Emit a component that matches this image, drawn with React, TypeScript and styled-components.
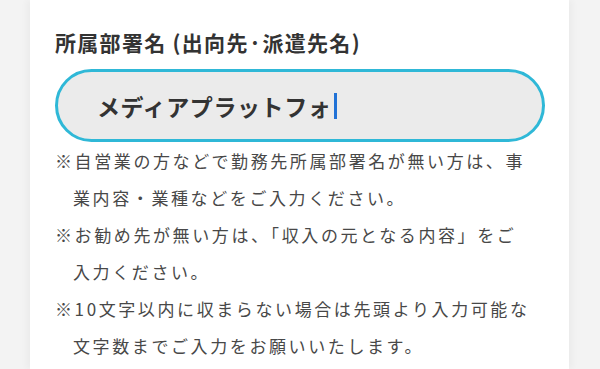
import React from 'react';
import styled, { createGlobalStyle } from 'styled-components';

const GlobalStyle = createGlobalStyle`
  html, body {
    margin: 0;
    padding: 0;
    background: #f3f3f3;
  }
  body {
    font-family: "Noto Sans CJK JP", "Noto Sans", sans-serif;
    color: #333333;
  }
`;

const notes = [
  ['※自営業の方などで勤務先所属部署名が無い方は、事', '業内容・業種などをご入力ください。'],
  ['※お勧め先が無い方は、「収入の元となる内容」をご', '入力ください。'],
  ['※10文字以内に収まらない場合は先頭より入力可能な', '文字数までご入力をお願いいたします。'],
];

const App = () => {
  return (
    <>
      <GlobalStyle />
      <Page>
        <Card>
          <FieldLabel>所属部署名 (出向先·派遣先名)</FieldLabel>
          <InputPill>
            <InputText>メディアプラットフォ</InputText>
            <Caret />
          </InputPill>
          <NoteList>
            {notes.map((lines, i) => (
              <Note key={i}>
                {lines[0]}
                <br />
                {lines[1]}
              </Note>
            ))}
          </NoteList>
        </Card>
      </Page>
    </>
  );
};

const Page = styled.div`
  display: flex;
  width: 600px;
  height: 369px;
  overflow: hidden;
  background: #f3f3f3;
`;

const Card = styled.div`
  display: flex;
  flex-direction: column;
  width: 539px;
  margin-left: 30px;
  padding: 27px 24px 0 25px;
  box-sizing: border-box;
  background: #ffffff;
  box-shadow: -4px 0 6px rgba(0, 0, 0, 0.03), 4px 0 6px rgba(0, 0, 0, 0.03);
`;

const FieldLabel = styled.div`
  font-size: 21px;
  font-weight: 700;
  line-height: 30px;
  letter-spacing: 1.3px;
  color: #333333;
  white-space: nowrap;
`;

const InputPill = styled.div`
  display: flex;
  align-items: center;
  height: 73px;
  margin-top: 12px;
  padding-left: 39px;
  box-sizing: border-box;
  border: 3px solid #2fb8d7;
  border-radius: 37px;
  background: #ebebeb;
`;

const InputText = styled.span`
  font-size: 23px;
  font-weight: 700;
  line-height: 30px;
  letter-spacing: 0.6px;
  color: #333333;
`;

const Caret = styled.span`
  display: inline-block;
  width: 3px;
  height: 26px;
  margin-left: 3px;
  background: #2172d6;
`;

const NoteList = styled.div`
  display: flex;
  flex-direction: column;
`;

const Note = styled.p`
  margin: 0;
  padding-left: 18px;
  text-indent: -18px;
  font-size: 17px;
  line-height: 37px;
  letter-spacing: 2.6px;
  color: #484848;
  white-space: nowrap;
`;

export default App;
